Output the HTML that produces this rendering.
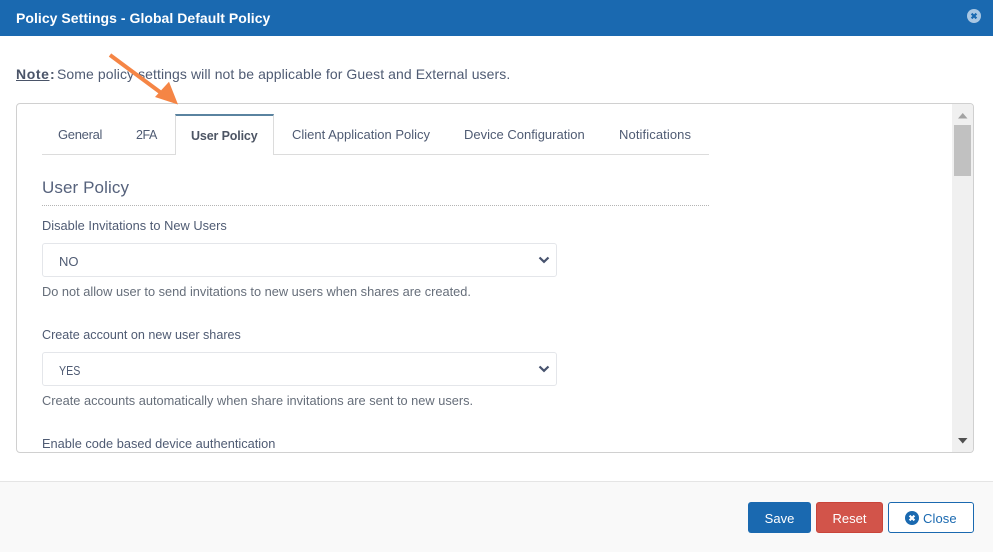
<!DOCTYPE html>
<html><head><meta charset="utf-8"><style>
*{box-sizing:border-box}
html,body{margin:0;padding:0;width:993px;height:552px;overflow:hidden;background:#fff;font-family:"Liberation Sans",sans-serif}
.t{position:absolute;white-space:nowrap;line-height:16px;color:#4f5b73;font-size:12.8px}
.b{position:absolute;box-sizing:border-box}
.sel{position:absolute;left:42px;width:515px;height:34px;border:1px solid #e4e6ea;border-radius:3px;background:#fff}
</style></head><body>
<div class="b" style="left:0;top:0;width:993px;height:36px;background:#1a69b0"></div>
<div class="t" style="left:16px;top:10px;font-size:14px;font-weight:bold;color:#fff;letter-spacing:.04px">Policy Settings - Global Default Policy</div>
<svg class="b" style="left:967px;top:9px" width="14" height="14" viewBox="0 0 14 14"><circle cx="7" cy="7" r="7" fill="#a9c7e3"/><path d="M4.600 4.600L9.400 9.400M9.400 4.600L4.600 9.400" stroke="#1a69b0" stroke-width="2.200"/></svg>

<div class="t" style="left:16px;top:66px;font-size:14px;font-weight:bold;text-decoration:underline;color:#4a5468;letter-spacing:.6px">Note</div>
<div class="t" style="left:50px;top:66px;font-size:14px;font-weight:bold;color:#4a5468">:</div>
<div class="t" style="left:57px;top:66px;font-size:14px;letter-spacing:.08px">Some policy settings will not be applicable for Guest and External users.</div>

<div class="b" style="left:16px;top:103px;width:958px;height:350px;border:1px solid #d0d0d0;border-radius:4px;background:#fff;overflow:hidden"></div>
<div class="b" style="left:952px;top:104px;width:21px;height:348px;background:#f0f0f0;border-radius:0 3px 3px 0"></div>
<div class="b" style="left:954px;top:125px;width:17px;height:51px;background:#c1c1c1"></div>
<svg class="b" style="left:957px;top:112px" width="12" height="8"><path d="M1 6.500H10.500L5.750 1Z" fill="#a3a3a3"/></svg>
<svg class="b" style="left:957px;top:437px" width="12" height="8"><path d="M1 1H10.500L5.750 6.500Z" fill="#505050"/></svg>

<div class="b" style="left:42px;top:154px;width:667px;height:1px;background:#dcdcdc"></div>
<div class="b" style="left:175px;top:114px;width:99px;height:41px;background:#fff;border:1px solid #dcdcdc;border-top:2px solid #5a83a0;border-bottom:0"></div>
<div class="t" style="left:58px;top:127px;font-size:13px;letter-spacing:-.3px">General</div>
<div class="t" style="left:136px;top:127px;font-size:12.5px;letter-spacing:-.45px">2FA</div>
<div class="t" style="left:191px;top:128px;font-size:12.5px;font-weight:bold;color:#4d5564;letter-spacing:-.14px">User Policy</div>
<div class="t" style="left:292px;top:127px;font-size:13px">Client Application Policy</div>
<div class="t" style="left:464px;top:127px;font-size:13px">Device Configuration</div>
<div class="t" style="left:619px;top:127px;font-size:13px;letter-spacing:.1px">Notifications</div>

<div class="t" style="left:42px;top:179px;font-size:17px;line-height:18px;color:#56627c;letter-spacing:.1px">User Policy</div>
<div class="b" style="left:42px;top:205px;width:667px;height:1px;border-top:1px dotted #b4b4b4"></div>

<div class="t" style="left:42px;top:218px;letter-spacing:.02px">Disable Invitations to New Users</div>
<div class="sel" style="top:243px"></div>
<div class="t" style="left:59px;top:254px;font-size:13px">NO</div>
<svg class="b" style="left:538px;top:256px" width="12" height="8"><path d="M1.500 1.500L6 5.800L10.500 1.500" fill="none" stroke="#47536e" stroke-width="2.200"/></svg>
<div class="t" style="left:42px;top:284px;color:#666e7a">Do not allow user to send invitations to new users when shares are created.</div>

<div class="t" style="left:42px;top:327px;font-size:12.6px">Create account on new user shares</div>
<div class="sel" style="top:352px"></div>
<div class="t" style="left:59px;top:363px;font-size:13px;transform:scaleX(.82);transform-origin:left center">YES</div>
<svg class="b" style="left:538px;top:365px" width="12" height="8"><path d="M1.500 1.500L6 5.800L10.500 1.500" fill="none" stroke="#47536e" stroke-width="2.200"/></svg>
<div class="t" style="left:42px;top:393px;color:#666e7a">Create accounts automatically when share invitations are sent to new users.</div>
<div class="t" style="left:42px;top:436px">Enable code based device authentication</div>

<svg class="b" style="left:100px;top:48px" width="85" height="62" viewBox="0 0 85 62"><path d="M10 7L64 47" stroke="#f58545" stroke-width="4" fill="none"/><path d="M78 56.500L55 49L69 33.700Z" fill="#f58545"/></svg>

<div class="b" style="left:0;top:481px;width:993px;height:71px;background:#f9f9f9;border-top:1px solid #e5e5e5"></div>
<div class="b" style="left:748px;top:502px;width:63px;height:31px;background:#1a69b0;border-radius:3px"></div>
<div class="t" style="left:748px;top:511px;width:63px;text-align:center;color:#fff;font-size:13px">Save</div>
<div class="b" style="left:816px;top:502px;width:67px;height:31px;background:#d2544a;border:1px solid #c9443a;border-radius:3px"></div>
<div class="t" style="left:816px;top:511px;width:67px;text-align:center;color:#fff;font-size:13px">Reset</div>
<div class="b" style="left:888px;top:502px;width:86px;height:31px;background:#fff;border:1px solid #1a69b0;border-radius:3px"></div>
<svg class="b" style="left:905px;top:511px" width="14" height="14" viewBox="0 0 14 14"><circle cx="7" cy="7" r="7" fill="#1a69b0"/><path d="M4.600 4.600L9.400 9.400M9.400 4.600L4.600 9.400" stroke="#fff" stroke-width="2.200"/></svg>
<div class="t" style="left:923px;top:511px;color:#1a69b0;font-size:13px;letter-spacing:.1px">Close</div>
</body></html>
